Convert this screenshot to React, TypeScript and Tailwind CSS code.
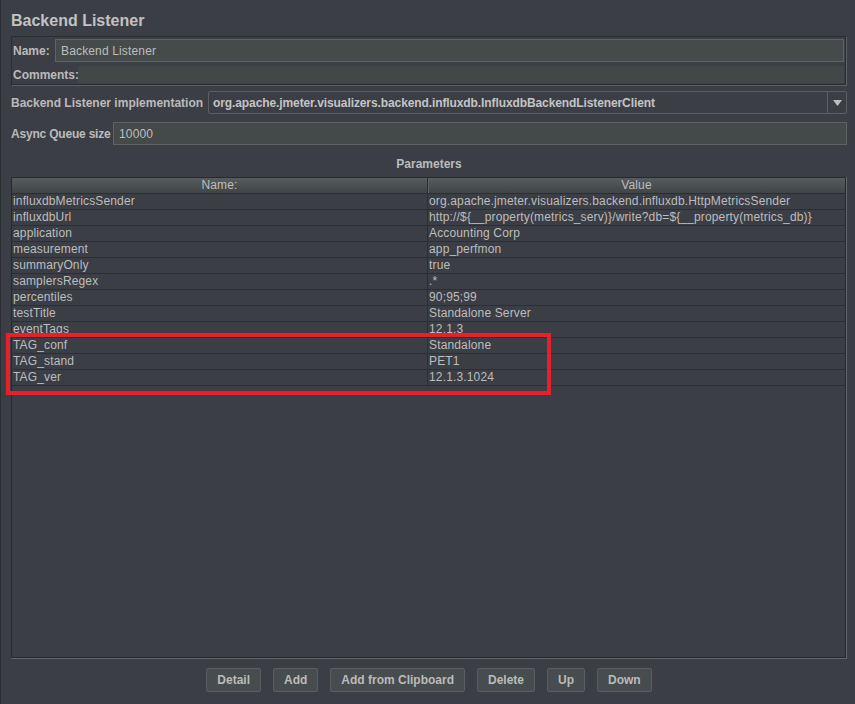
import React from "react";

const rows: [string, string][] = [
  ["influxdbMetricsSender", "org.apache.jmeter.visualizers.backend.influxdb.HttpMetricsSender"],
  ["influxdbUrl", "http://${__property(metrics_serv)}/write?db=${__property(metrics_db)}"],
  ["application", "Accounting Corp"],
  ["measurement", "app_perfmon"],
  ["summaryOnly", "true"],
  ["samplersRegex", ".*"],
  ["percentiles", "90;95;99"],
  ["testTitle", "Standalone Server"],
  ["eventTags", "12.1.3"],
  ["TAG_conf", "Standalone"],
  ["TAG_stand", "PET1"],
  ["TAG_ver", "12.1.3.1024"],
];

const buttons = ["Detail", "Add", "Add from Clipboard", "Delete", "Up", "Down"];

function ParamRow({ name, value }: { name: string; value: string }) {
  return (
    <div className="grid h-[16px] grid-cols-[416px_1fr] border-b border-[#2c2f32] text-[12px] leading-[15px] tracking-[0.15px] text-[#bdbdbd]">
      <div className="truncate border-r border-[#2c2f32] pl-[1px]">{name}</div>
      <div className="truncate pl-[1px]">{value}</div>
    </div>
  );
}

export default function App() {
  return (
    <div
      className="relative flex h-[704px] w-[855px] flex-col overflow-hidden border-l border-[#2a2e30] bg-[#3b3e45] pl-[10px] pr-[8px] text-[#bbbbbb]"
      style={{ fontFamily: '"Liberation Sans", Arial, sans-serif' }}
    >
      <div className="mt-[11px] h-[20px] text-[16px] font-bold leading-[20px] text-[#c2c2c2]">Backend Listener</div>

      {/* name / comments */}
      <div className="mt-[5px] mr-[1px] flex h-[49px] flex-col border border-[#2b2e30] pl-[1px] shadow-[1px_1px_0_#5c6163]">
        <div className="mt-[2px] flex h-[23px] items-center">
          <span className="w-[42px] shrink-0 text-[12px] font-bold">Name:</span>
          <div className="mr-[1px] flex h-[23px] flex-1 items-center border border-[#5e6462] bg-[#454b4a] pl-[5px] text-[12px] tracking-[0.15px] text-[#bdbdbd]">
            Backend Listener
          </div>
        </div>
        <div className="mt-[4px] flex h-[17px] items-center">
          <span className="w-[65px] shrink-0 whitespace-nowrap text-[12px] font-bold">Comments:</span>
          <div className="mr-[1px] h-[17px] flex-1 bg-[#424847]" />
        </div>
      </div>

      {/* implementation combo */}
      <div className="mt-[6px] flex h-[23px] items-center">
        <span className="w-[197px] shrink-0 whitespace-nowrap text-[12px] font-bold">Backend Listener implementation</span>
        <div className="flex h-[23px] flex-1 items-center rounded-[2px] border border-[#5b5f61]">
          <span className="flex-1 whitespace-nowrap pl-[4px] text-[12px] font-bold tracking-[-0.1px] text-[#c4c4c4]">
            org.apache.jmeter.visualizers.backend.influxdb.InfluxdbBackendListenerClient
          </span>
          <div className="flex h-full w-[19px] items-center justify-center border-l border-[#5b5f61]">
            <svg width="9" height="6" viewBox="0 0 9 6">
              <path d="M0 0h9L4.5 6z" fill="#bdbdbd" />
            </svg>
          </div>
        </div>
      </div>

      {/* async queue */}
      <div className="mt-[8px] flex h-[23px] items-center">
        <span className="w-[102px] shrink-0 whitespace-nowrap text-[12px] font-bold tracking-[-0.2px]">Async Queue size</span>
        <div className="flex h-[23px] flex-1 items-center border border-[#5e6462] bg-[#444a49] pl-[5px] text-[12px] tracking-[0.15px] text-[#bdbdbd]">
          10000
        </div>
      </div>

      <div className="mt-[11px] h-[16px] text-center text-[12px] font-bold leading-[16px]">Parameters</div>

      {/* parameters table */}
      <div className="mt-[5px] h-[482px] border-r border-b border-[#62676a]">
        <div className="flex h-full flex-col border border-[#27292c]">
          <div className="grid h-[16px] grid-cols-[416px_1fr] border-b border-[#2c2f32] bg-gradient-to-b from-[#575c5e] to-[#3f4446] text-center text-[12px] leading-[15px] tracking-[0.15px] text-[#bdbdbd]">
            <div className="border-r border-[#2c2f32] shadow-[1px_0_0_#5d6264]">Name:</div>
            <div>Value</div>
          </div>
          {rows.map(([n, v]) => (
            <ParamRow key={n} name={n} value={v} />
          ))}
        </div>
      </div>

      <div className="mt-[9px] flex h-[24px] justify-center gap-3">
        {buttons.map((b) => (
          <div
            key={b}
            className="flex h-[24px] items-center rounded-[2px] border border-[#595e60] bg-[#474c4e] px-[10px] text-[12px] font-bold text-[#bbbbbb]"
          >
            {b}
          </div>
        ))}
      </div>

      {/* red highlight annotation */}
      <div className="pointer-events-none absolute left-[5px] top-[333px] h-[62px] w-[545px] border-4 border-[#e8202a]" />
    </div>
  );
}
